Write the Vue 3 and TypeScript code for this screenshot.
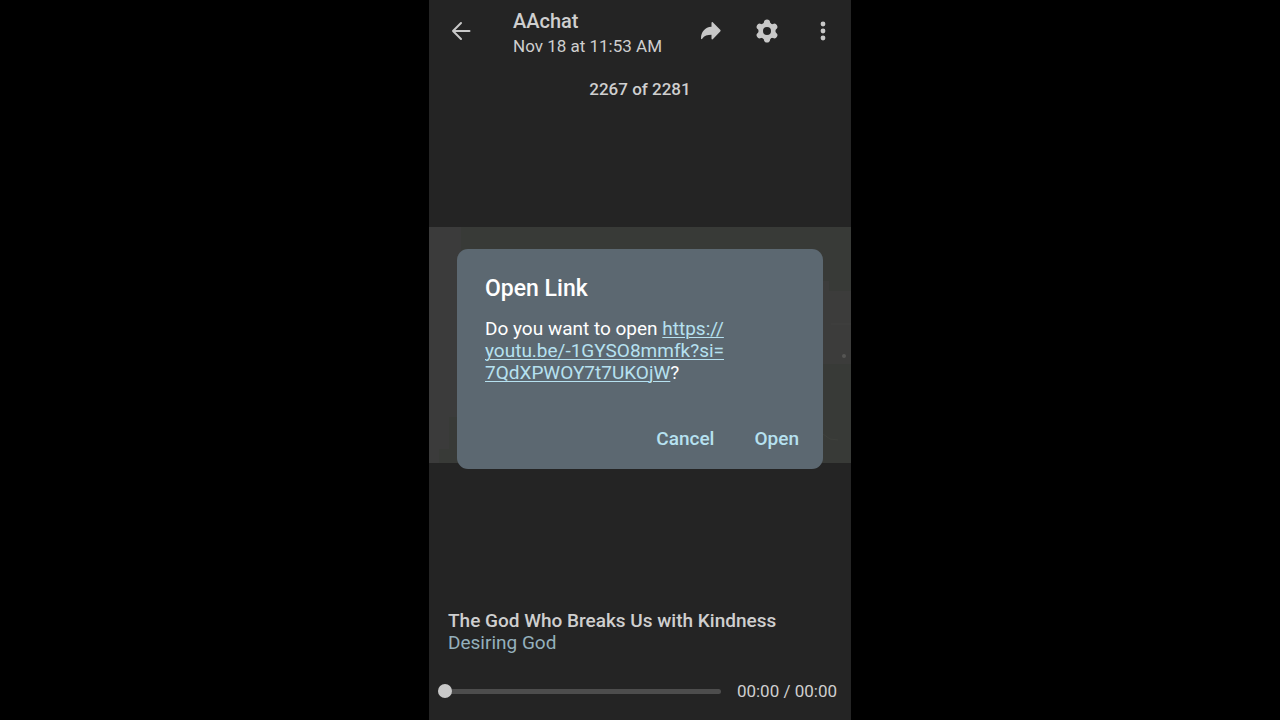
<script setup lang="ts">
import { ref } from 'vue'

const position = ref(0)
const dialogOpen = ref(true)
const current = 2267
const total = 2281
const teeth = [0, 60, 120, 180, 240, 300]
</script>

<template>
  <div class="stage">
    <main class="phone">
      <header class="bar">
        <button class="icon-button" type="button" aria-label="Back">
          <svg viewBox="0 0 24 24" width="24" height="24" fill="none" stroke="currentColor" stroke-width="2" stroke-linecap="round" stroke-linejoin="round">
            <path d="M20.500 12H4M12 4L4 12l8 8" />
          </svg>
        </button>
        <div class="heading">
          <h1>AAchat</h1>
          <p>Nov 18 at 11:53 AM</p>
        </div>
        <nav class="actions">
          <button class="icon-button" type="button" aria-label="Forward">
            <svg viewBox="0 0 24 24" width="24" height="24" fill="currentColor">
              <path d="M12.500 4c0-1 .8-1.300 1.500-.6l7.200 7.400c.6.600.600 1.200 0 1.800L14 20c-.7.700-1.500.400-1.500-.6v-3.600c-4.200 0-7.200.900-9.300 4-.5.700-1.200.5-1.200-.4C2 13.200 5.800 8.200 12.500 7.800z" />
            </svg>
          </button>
          <button class="icon-button" type="button" aria-label="Settings">
            <svg viewBox="0 0 24 24" width="24" height="24" fill="currentColor">
              <path fill-rule="evenodd" d="M12 3.500a8.500 8.500 0 1 0 0 17 8.500 8.500 0 0 0 0-17zm0 4.500a4 4 0 1 1 0 8 4 4 0 0 1 0-8z" />
              <path v-for="angle in teeth" :key="angle" :transform="`rotate(${angle} 12 12)`" d="M7.500 5.400Q8.800 4.600 8.900 3.300 9.200.5 12 .5t3.100 2.800q.1 1.300 1.400 2.100z" />
            </svg>
          </button>
          <button class="icon-button" type="button" aria-label="More options">
            <svg viewBox="0 0 24 24" width="24" height="24" fill="currentColor">
              <circle cx="12" cy="5" r="2.400" />
              <circle cx="12" cy="12" r="2.400" />
              <circle cx="12" cy="19" r="2.400" />
            </svg>
          </button>
        </nav>
      </header>

      <p class="counter">{{ current }} of {{ total }}</p>

      <section class="viewer" aria-label="Video preview">
        <svg class="frame" viewBox="0 0 422 236" preserveAspectRatio="none" aria-hidden="true">
          <rect width="422" height="236" fill="#383a37" />
          <path d="M0 0H32V190H20V222H10V236H0z" fill="#3b3b3b" />
          <path d="M400 64H422V137H390V54H400z" fill="#3c3c3b" />
          <path d="M402 97H422" stroke="#414140" stroke-width="1" />
          <circle cx="415" cy="129" r="2" fill="#555553" />
          <path d="M394 207l7 5 8 1" stroke="#3e403c" fill="none" />
        </svg>
      </section>

      <footer class="details">
        <h2>The God Who Breaks Us with Kindness</h2>
        <a class="author" href="#">Desiring God</a>
        <div class="player">
          <input v-model="position" class="seek" type="range" min="0" max="100" aria-label="Playback position" />
          <span class="time">00:00 / 00:00</span>
        </div>
      </footer>

      <div v-if="dialogOpen" class="overlay">
        <section class="dialog" role="dialog" aria-modal="true" aria-labelledby="dialog-title">
          <h2 id="dialog-title">Open Link</h2>
          <p>
            Do you want to open <a href="https://youtu.be/-1GYSO8mmfk?si=7QdXPWOY7t7UKOjW">https://<wbr />youtu.be/-1GYSO8mmfk?si=<wbr />7QdXPWOY7t7UKOjW</a>?
          </p>
          <div class="choices">
            <button type="button" @click="dialogOpen = false">Cancel</button>
            <button type="button" @click="dialogOpen = false">Open</button>
          </div>
        </section>
      </div>
    </main>
  </div>
</template>

<style>
body {
  background: #000;
}
</style>

<style scoped>
.stage {
  display: flex;
  justify-content: center;
  min-height: 100vh;
  background: #000;
  font-family: Roboto, "Noto Sans", sans-serif;
}

h1,
h2,
p {
  margin: 0;
}

button {
  padding: 0;
  border: 0;
  background: none;
  color: inherit;
  font: inherit;
  cursor: pointer;
}

.phone {
  position: relative;
  display: flex;
  flex-direction: column;
  width: 100%;
  max-width: 422px;
  background: #242424;
  color: #cfcfcf;
}

.bar {
  display: flex;
  align-items: center;
  height: 62px;
  padding: 0 8px 0 12px;
}

.icon-button {
  display: grid;
  place-items: center;
  width: 40px;
  height: 40px;
  color: #c8c8c8;
}

.heading {
  flex: 1;
  padding: 4px 0 0 32px;
}

.heading h1 {
  font-size: 20px;
  font-weight: 500;
  line-height: 26px;
}

.heading p {
  font-size: 17px;
  line-height: 24px;
}

.actions {
  display: flex;
  gap: 16px;
}

.counter {
  padding: 16px 0;
  font-size: 17px;
  font-weight: 500;
  line-height: 22px;
  text-align: center;
}

.viewer {
  display: flex;
  flex: 1;
  align-items: center;
  padding-bottom: 36px;
}

.frame {
  display: block;
  width: 100%;
  height: 236px;
}

.details {
  padding: 0 14px 18px 19px;
}

.details h2 {
  font-size: 19px;
  font-weight: 500;
  line-height: 22px;
}

.author {
  display: block;
  color: #94b0bc;
  font-size: 19px;
  line-height: 22px;
  text-decoration: none;
}

.player {
  display: flex;
  align-items: center;
  gap: 16px;
  margin: 26px 0 0 -10px;
}

.seek {
  flex: 1;
  min-width: 0;
  height: 22px;
  margin: 0;
  appearance: none;
  background: none;
}

.seek::-webkit-slider-runnable-track {
  height: 5px;
  border-radius: 3px;
  background: #4d4d4d;
}

.seek::-webkit-slider-thumb {
  width: 14px;
  height: 14px;
  margin-top: -5px;
  appearance: none;
  border-radius: 50%;
  background: #c8c8c8;
}

.time {
  font-size: 17px;
  line-height: 22px;
}

.overlay {
  position: absolute;
  inset: 0;
  display: grid;
  align-items: center;
  padding: 0 28px 2px;
}

.dialog {
  padding: 26px 24px 14px 28px;
  border-radius: 11px;
  background: #5c6871;
  color: #fff;
}

.dialog h2 {
  font-size: 23px;
  font-weight: 500;
  line-height: 28px;
}

.dialog p {
  margin-top: 15px;
  font-size: 19px;
  line-height: 22px;
}

.dialog a {
  color: #b6e1f0;
  text-decoration: underline;
  text-decoration-thickness: 1px;
  text-underline-offset: 2px;
}

.choices {
  display: flex;
  justify-content: flex-end;
  gap: 40px;
  margin-top: 39px;
}

.choices button {
  color: #b6e1f0;
  font-size: 19px;
  font-weight: 500;
  line-height: 32px;
}
</style>
